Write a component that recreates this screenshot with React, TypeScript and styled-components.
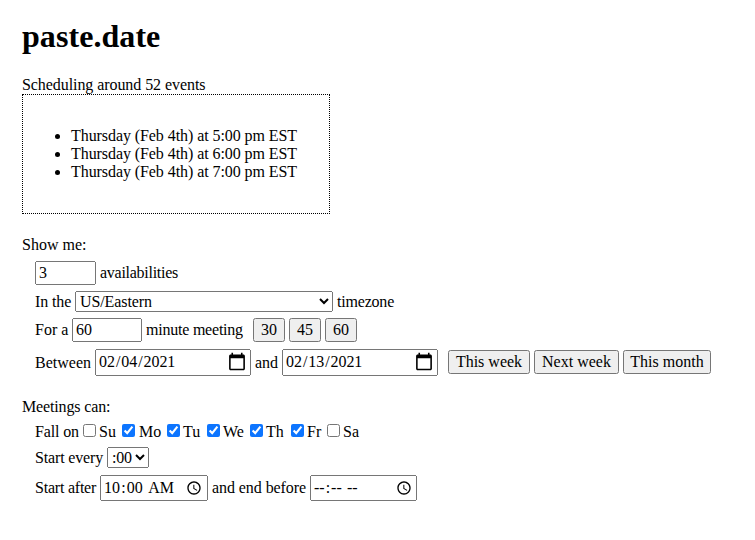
import React from "react";
import styled, { createGlobalStyle } from "styled-components";

const Global = createGlobalStyle`
  body { margin: 0; background: #fff; color: #000; font-family: "Liberation Serif", serif; font-size: 16px; }
`;
const Page = styled.main`padding: 18px 22px;`;
const Title = styled.h1`margin: 0; font-size: 32px; line-height: 37px; letter-spacing: 0.06px;`;
const Summary = styled.div`margin-top: 21px; line-height: 18px; letter-spacing: -0.07px;`;
const Results = styled.div`box-sizing: border-box; width: 308px; height: 120px; padding: 16px; border: 1px dotted #000;`;
const Slots = styled.ul`margin: 16px 0; padding-left: 32px; line-height: 18px; letter-spacing: -0.074px;`;
const Section = styled.section`margin-top: 22px;`;
const Heading = styled.div<{ $track?: number }>`line-height: 18px; letter-spacing: ${p => p.$track ?? 0}px;`;
const Row = styled.div<{ $top: number; $h: number }>`
  display: flex; align-items: center; height: ${p => p.$h}px; margin-top: ${p => p.$top}px; padding-left: 13px;
`;
const Label = styled.span<{ $w: number; $track?: number; $indent?: number; $drop?: number }>`
  box-sizing: border-box; flex: none; width: ${p => p.$w}px; line-height: 18px; white-space: nowrap;
  padding-left: ${p => p.$indent ?? 0}px; padding-top: ${p => p.$drop ?? 0}px; letter-spacing: ${p => p.$track ?? 0}px;
`;
const Field = styled.input<{ $w: number; $h: number; $shift?: number }>`
  box-sizing: border-box; flex: none; width: ${p => p.$w}px; height: ${p => p.$h}px; margin: 0; font: 16px "Liberation Serif", serif;
  &[type="date"] { padding-top: 0; padding-bottom: 2px; letter-spacing: -0.07px; }
  &[type="date"]::-webkit-calendar-picker-indicator { width: 20px; height: 20px; }
  &[type="time"] { letter-spacing: 0.08px; }
  &[type="time"]::-webkit-calendar-picker-indicator { transform: translateX(${p => p.$shift ?? 0}px); }
`;
const Select = styled.select<{ $w: number; $track: number }>`
  box-sizing: border-box; flex: none; width: ${p => p.$w}px; height: 21px; margin: 0; padding: 0;
  font: 16px "Liberation Serif", serif; letter-spacing: ${p => p.$track}px;
`;
const Buttons = styled.span<{ $lift?: number }>`display: flex; gap: 4px; margin-bottom: ${p => p.$lift ?? 0}px;`;
const Button = styled.button<{ $w: number }>`
  box-sizing: border-box; width: ${p => p.$w}px; height: 24px; padding: 1px 0; white-space: nowrap; font: 16px "Liberation Serif", serif;
`;
const Check = styled.input`flex: none; width: 13px; height: 13px; margin: 0; accent-color: #0d75ff;`;

const days = [
  { name: "Su", width: 26, indent: 3 },
  { name: "Mo", width: 32, indent: 4 },
  { name: "Tu", width: 27, indent: 3 },
  { name: "We", width: 30, indent: 3 },
  { name: "Th", width: 28, indent: 3 },
  { name: "Fr", width: 23, indent: 3 },
  { name: "Sa", width: 24, indent: 3 },
];
const ranges = [
  { name: "This week", width: 82 },
  { name: "Next week", width: 85 },
  { name: "This month", width: 88 },
];

export default function App() {
  return <><Global /><Page>
    <Title>paste.date</Title>
    <Summary>Scheduling around 52 events</Summary>
    <Results><Slots>{[5, 6, 7].map(h => <li key={h}>Thursday (Feb 4th) at {h}:00 pm EST</li>)}</Slots></Results>
    <Section>
      <Heading>Show me:</Heading>
      <Row $top={7} $h={24}>
        <Field $w={61} $h={24} type="number" defaultValue="3" />
        <Label $w={100} $indent={4} $track={-0.27}>availabilities</Label>
      </Row>
      <Row $top={6} $h={21}>
        <Label $w={40} $track={-0.1}>In the</Label>
        <Select $w={258} $track={-0.1}><option>US/Eastern</option></Select>
        <Label $w={80} $indent={4} $track={-0.2}>timezone</Label>
      </Row>
      <Row $top={6} $h={24}>
        <Label $w={37}>For a</Label>
        <Field $w={70} $h={24} type="number" defaultValue="60" />
        <Label $w={111} $indent={4} $track={-0.22}>minute meeting</Label>
        <Buttons>{[30, 45, 60].map(n => <Button $w={32} key={n}>{n}</Button>)}</Buttons>
      </Row>
      <Row $top={7} $h={27}>
        <Label $w={60} $drop={1}>Between</Label>
        <Field $w={156} $h={27} type="date" defaultValue="2021-02-04" />
        <Label $w={31} $indent={4} $drop={1}>and</Label>
        <Field $w={156} $h={27} type="date" defaultValue="2021-02-13" />
        <Label $w={10} />
        <Buttons $lift={1}>{ranges.map(r => <Button $w={r.width} key={r.name}>{r.name}</Button>)}</Buttons>
      </Row>
    </Section>
    <Section>
      <Heading $track={-0.14}>Meetings can:</Heading>
      <Row $top={8} $h={13}>
        <Label $w={48} $track={-0.15} $drop={3}>Fall on</Label>
        {days.map((d, i) => <React.Fragment key={d.name}>
          <Check type="checkbox" defaultChecked={i > 0 && i < 6} />
          <Label $w={d.width} $indent={d.indent} $drop={3}>{d.name}</Label>
        </React.Fragment>)}
      </Row>
      <Row $top={10} $h={21}>
        <Label $w={72} $track={-0.16}>Start every</Label>
        <Select $w={42} $track={-0.25}><option>:00</option></Select>
      </Row>
      <Row $top={7} $h={26}>
        <Label $w={65} $track={-0.22}>Start after</Label>
        <Field $w={108} $h={26} type="time" defaultValue="10:00" />
        <Label $w={102} $indent={4} $track={-0.07}>and end before</Label>
        <Field $w={107} $h={26} $shift={1} type="time" />
      </Row>
    </Section>
  </Page></>;
}
